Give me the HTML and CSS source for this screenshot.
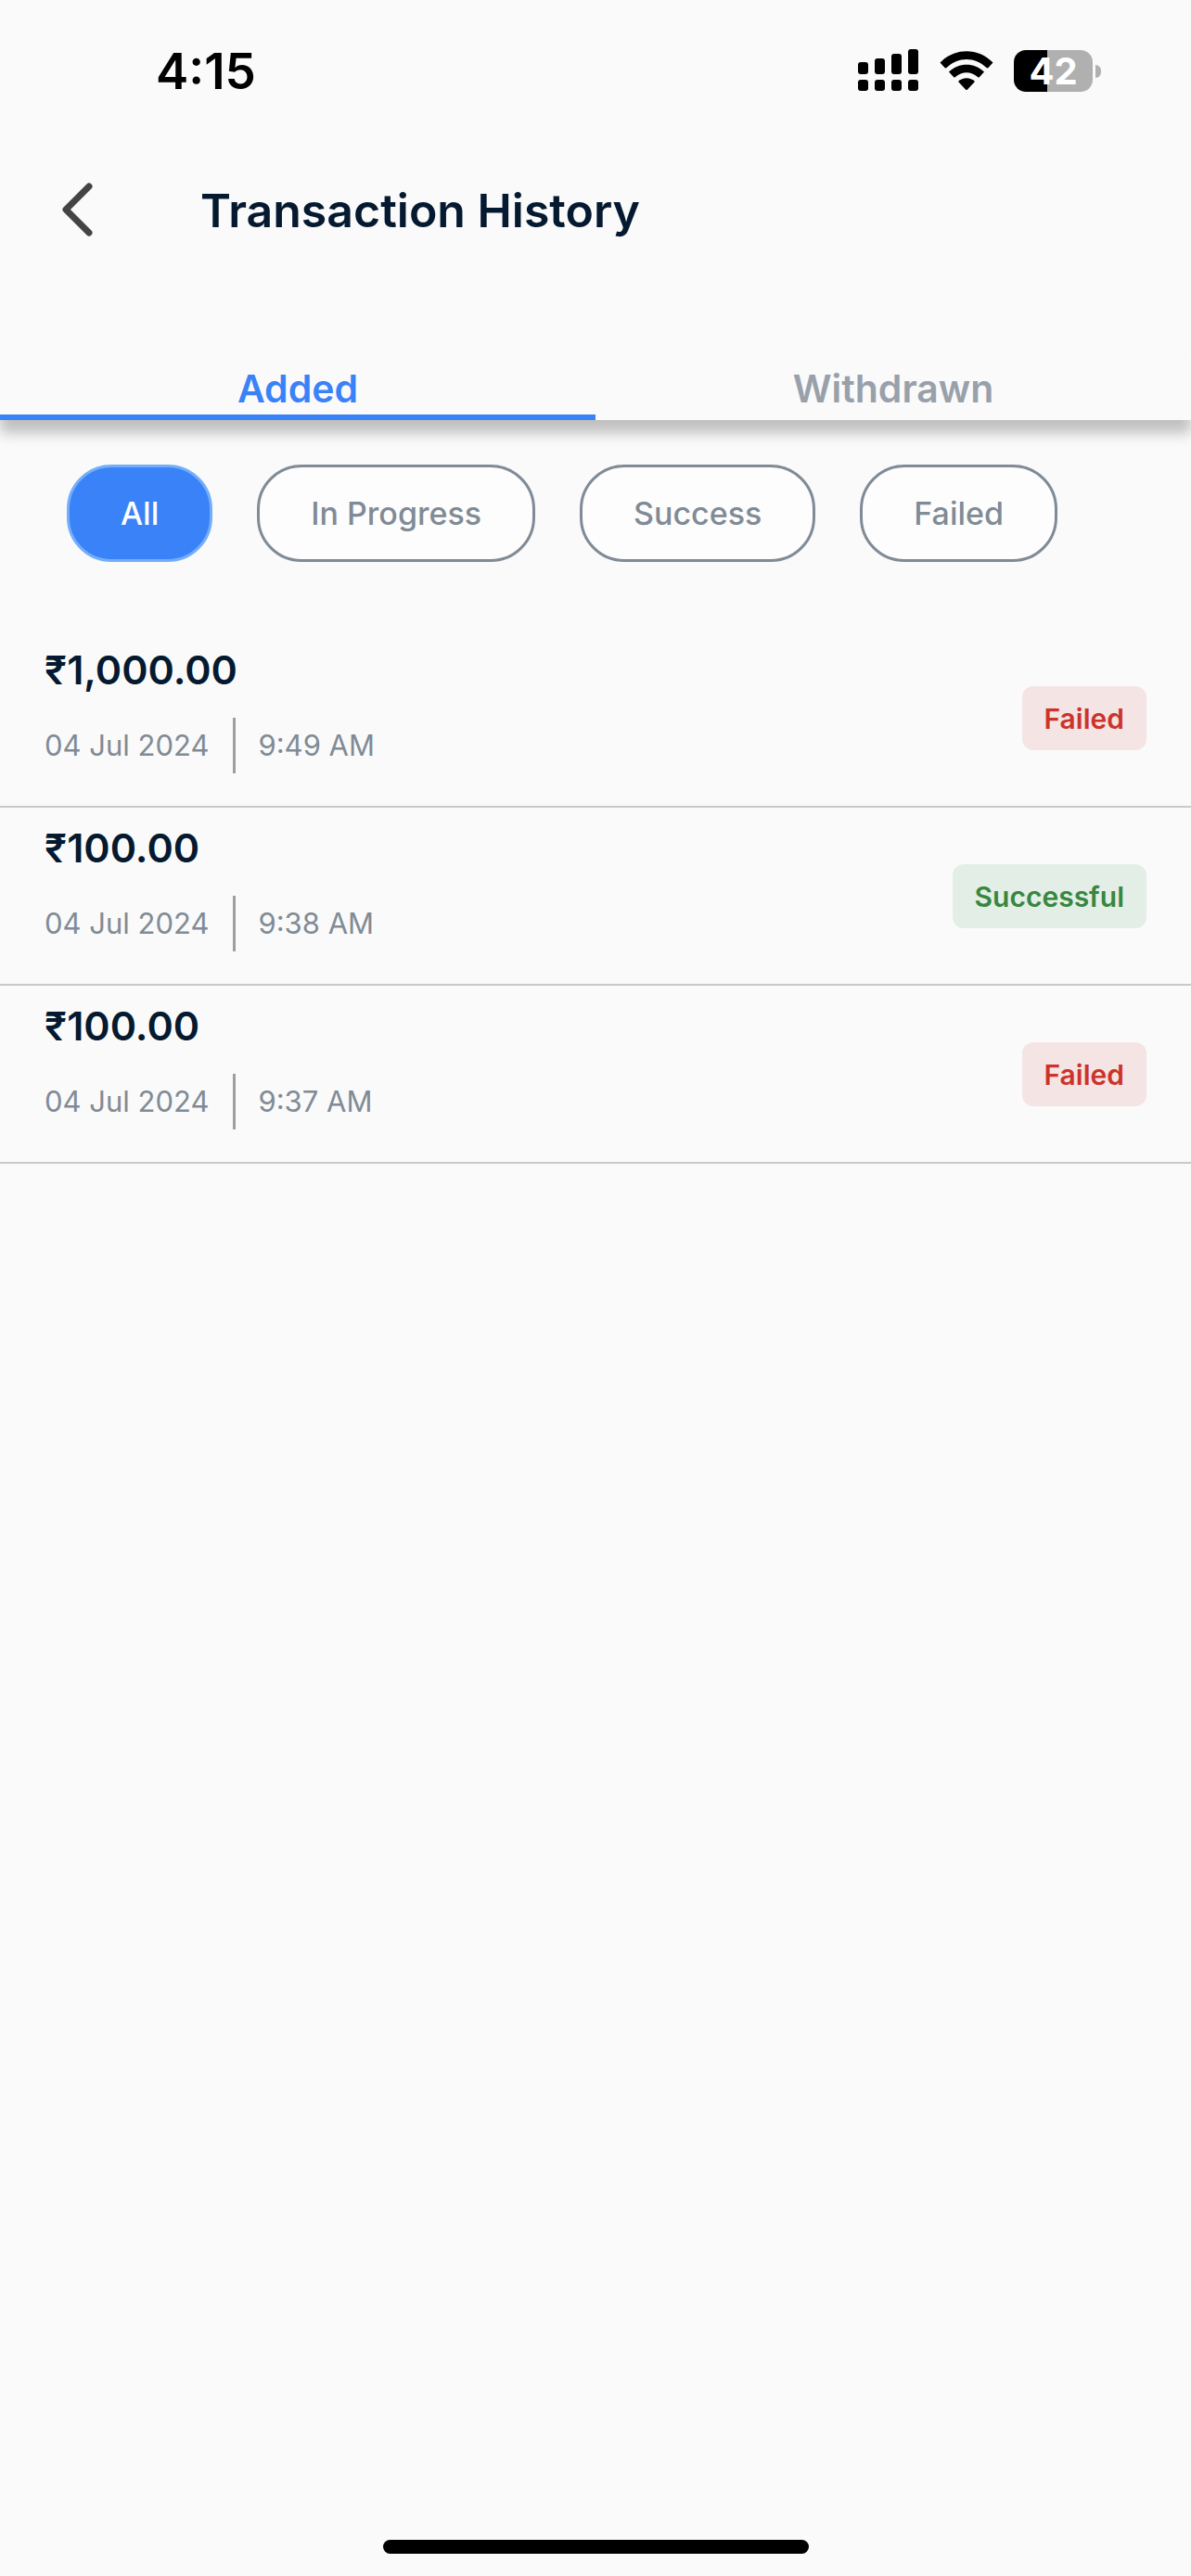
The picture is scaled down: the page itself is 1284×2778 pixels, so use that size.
FILE: index.html
```html
<!DOCTYPE html>
<html lang="en">
    <head>
        <meta charset="utf-8">
        <meta name="viewport" content="width=device-width, initial-scale=1">
        <title>Transaction History</title>
        <link rel="stylesheet" href="styles.css">
    </head>
    <body>
        <div class="statusbar">
            <span class="clock">4:15</span>
            <div class="status-icons">
                <svg class="signal" viewBox="0 0 66 46" aria-hidden="true">
                    <rect x="0" y="14" width="11" height="13" rx="3"/>
                    <rect x="18" y="10" width="11" height="17" rx="3"/>
                    <rect x="36" y="5" width="11" height="22" rx="3"/>
                    <rect x="54" y="0" width="11" height="27" rx="3"/>
                    <rect x="0" y="33" width="11" height="12" rx="3"/>
                    <rect x="18" y="33" width="11" height="12" rx="3"/>
                    <rect x="36" y="33" width="11" height="12" rx="3"/>
                    <rect x="54" y="33" width="11" height="12" rx="3"/>
                </svg>
                <svg class="wifi" viewBox="0 0 58 43" aria-hidden="true">
                    <path d="M0.5 12.5 C16 -4 42 -4 57.5 12.5 L52.5 18 Q51.5 18.800 50.500 18 C38 6 20 6 7.500 18 Q6.500 18.800 5.500 18 Z"/>
                    <path d="M10 22.500 C20.500 12 37.500 12 48 22.500 L43 28 Q42 29 41 28 C34 21.500 24 21.500 17 28 Q16 29 15 28 Z"/>
                    <path d="M20 33 C25 28 33 28 38 33 L30 41.500 Q29 42.500 28 41.500 Z"/>
                </svg>
                <div class="battery">42</div>
            </div>
        </div>

        <header class="topbar">
            <button class="back" type="button" aria-label="Back">
                <svg viewBox="0 0 34 58" aria-hidden="true">
                    <path d="M30 4 L5 29 L30 54"/>
                </svg>
            </button>
            <h1>Transaction History</h1>
        </header>

        <nav class="tabs">
            <button class="tab active" type="button">Added</button>
            <button class="tab" type="button">Withdrawn</button>
        </nav>

        <div class="filters">
            <button class="chip selected" type="button">All</button>
            <button class="chip" type="button">In Progress</button>
            <button class="chip" type="button">Success</button>
            <button class="chip" type="button">Failed</button>
        </div>

        <ul class="transactions">
            <li class="transaction">
                <div class="info">
                    <div class="amount">₹1,000.00</div>
                    <div class="when"><span class="date">04 Jul 2024</span><span>9:49 AM</span></div>
                </div>
                <span class="badge failed">Failed</span>
            </li>
            <li class="transaction">
                <div class="info">
                    <div class="amount">₹100.00</div>
                    <div class="when"><span class="date">04 Jul 2024</span><span>9:38 AM</span></div>
                </div>
                <span class="badge success">Successful</span>
            </li>
            <li class="transaction">
                <div class="info">
                    <div class="amount">₹100.00</div>
                    <div class="when"><span class="date">04 Jul 2024</span><span>9:37 AM</span></div>
                </div>
                <span class="badge failed">Failed</span>
            </li>
        </ul>

        <div class="home-indicator"></div>
    </body>
</html>
```
FILE: styles.css
```css
*{
    box-sizing: border-box;
}
body{
    margin: 0;
    min-height: 100vh;
    display: flex;
    flex-direction: column;
    background-color: #fafafa;
    color: #051a30;
    font-family: Inter, "Noto Sans", sans-serif;
}
button{
    border: 0;
    padding: 0;
    background: none;
    font-family: inherit;
    cursor: pointer;
}

/* status bar */
.statusbar{
    display: flex;
    align-items: center;
    justify-content: space-between;
    height: 152px;
    padding: 0 106px 0 168px;
    color: #000;
}
.clock{
    padding-top: 2px;
    font-size: 53px;
    font-weight: 600;
}
.status-icons{
    display: flex;
    align-items: center;
    gap: 22px;
}
.signal{
    width: 66px;
    height: 46px;
}
.wifi{
    width: 58px;
    height: 43px;
}
.battery{
    position: relative;
    width: 85px;
    height: 45px;
    border-radius: 13px;
    background: linear-gradient(to right, #000 42%, #b0b0b0 42%);
    color: #fff;
    font-size: 40px;
    font-weight: 700;
    line-height: 45px;
    text-align: center;
}
.battery::after{
    content: "";
    position: absolute;
    left: 88px;
    top: 16px;
    width: 6px;
    height: 14px;
    border-radius: 0 6px 6px 0;
    background-color: #b0b0b0;
}

/* title */
.topbar{
    display: flex;
    align-items: center;
    gap: 116px;
    height: 148px;
    padding: 0 66px;
}
.back{
    display: flex;
}
.back svg{
    width: 34px;
    height: 58px;
    fill: none;
    stroke: #444;
    stroke-width: 7;
    stroke-linecap: round;
    stroke-linejoin: round;
}
h1{
    margin: 0;
    padding-top: 2px;
    font-size: 50px;
    font-weight: 600;
}

/* tabs */
.tabs{
    display: flex;
    margin-top: 83px;
    box-shadow: 0 14px 14px rgba(0, 0, 0, 0.24);
}
.tab{
    flex: 1;
    height: 70px;
    padding-top: 8px;
    border-bottom: 6px solid #fafafa;
    background-color: #fafafa;
    color: #98a1ab;
    font-size: 41px;
    font-weight: 600;
}
.tab.active{
    border-bottom-color: #3a82f7;
    color: #3a82f7;
}

/* filters */
.filters{
    display: flex;
    gap: 48px;
    padding: 48px 72px 73px;
}
.chip{
    height: 105px;
    padding: 0 55px;
    border: 3px solid #808b96;
    border-radius: 48px;
    background-color: #fdfdfd;
    color: #808b96;
    font-size: 34px;
    font-weight: 500;
}
.chip.selected{
    border-color: #73aefa;
    background-color: #3a82f7;
    color: #fff;
}

/* list */
.transactions{
    flex: 1;
    margin: 0;
    padding: 0;
    list-style: none;
}
.transaction{
    display: flex;
    align-items: center;
    justify-content: space-between;
    height: 192px;
    padding: 0 48px;
    border-bottom: 2px solid #c9c9c9;
}
.info{
    padding-bottom: 20px;
}
.amount{
    margin-bottom: 24px;
    font-size: 43px;
    font-weight: 600;
    line-height: 56px;
}
.when{
    display: flex;
    align-items: center;
    color: #808b96;
    font-size: 31px;
    line-height: 60px;
}
.date{
    margin-right: 24px;
    padding-right: 26px;
    border-right: 3px solid #9e9e9e;
}
.badge{
    padding: 2px 24px 0;
    border-radius: 12px;
    font-size: 30px;
    font-weight: 600;
    line-height: 67px;
}
.badge.failed{
    background-color: #f4e4e4;
    color: #cc342b;
}
.badge.success{
    background-color: #e3eee6;
    color: #37873f;
}

.home-indicator{
    width: 459px;
    height: 15px;
    margin: 0 auto 24px;
    border-radius: 8px;
    background-color: #000;
}
```
